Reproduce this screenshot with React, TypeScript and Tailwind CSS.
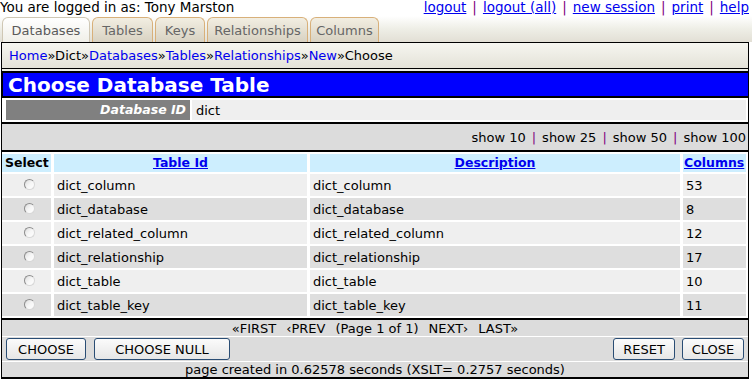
import React from "react";

const rows = [
  ["dict_column", "dict_column", "53"],
  ["dict_database", "dict_database", "8"],
  ["dict_related_column", "dict_related_column", "12"],
  ["dict_relationship", "dict_relationship", "17"],
  ["dict_table", "dict_table", "10"],
  ["dict_table_key", "dict_table_key", "11"],
];

const tabs = [
  ["Databases", "w-[88px]"],
  ["Tables", "w-[61px]"],
  ["Keys", "w-[50px]"],
  ["Relationships", "w-[101px]"],
  ["Columns", "w-[69px]"],
];

function Radio() {
  return (
    <span className="inline-block w-[11px] h-[11px] rounded-full border border-t-[#8c8c8c] border-l-[#8c8c8c] border-r-[#d8d8d8] border-b-[#d8d8d8] bg-gradient-to-br from-[#dcdcdc] via-[#f6f6f6] to-[#ffffff]" />
  );
}

function Btn({ children, w }: { children: React.ReactNode; w: string }) {
  return (
    <button
      className={`${w} h-[22px] rounded-[3px] border border-[#2a4d74] bg-gradient-to-b from-[#fbfbfb] to-[#e6e6e6] text-[13px] text-black leading-none`}
    >
      {children}
    </button>
  );
}

export default function App() {
  return (
    <div className="w-[752px] h-[381px] bg-white text-[13px] text-black font-['DejaVu_Sans',sans-serif] leading-none overflow-hidden">
      {/* top line */}
      <div className="flex justify-between items-center h-[16px] pr-[3px] text-[13.5px]">
        <span>You are logged in as: Tony Marston</span>
        <span className="flex gap-[6px]">
          <a className="text-[#0000ee] underline">logout</a>
          <span className="text-[#800080]">|</span>
          <a className="text-[#0000ee] underline">logout (all)</a>
          <span className="text-[#800080]">|</span>
          <a className="text-[#0000ee] underline">new session</a>
          <span className="text-[#800080]">|</span>
          <a className="text-[#0000ee] underline">print</a>
          <span className="text-[#800080]">|</span>
          <a className="text-[#0000ee] underline">help</a>
        </span>
      </div>
      {/* tabs */}
      <div className="flex items-end h-[26px] pl-[2px] bg-gradient-to-b from-[#ffffff] via-[#eeeee6] to-[#e2dfd5]">
        {tabs.map(([t, w], i) => (
          <div
            key={t}
            className={
              i === 0
                ? `${w} h-[25px] mr-[2px] flex items-center justify-center rounded-t-[6px] border border-b-0 border-[#cfc7b4] bg-gradient-to-b from-[#ffffff] to-[#f0efe8] text-[#5a5a5a]`
                : `${w} h-[25px] mr-[2px] flex items-center justify-center rounded-t-[6px] border border-b-0 border-[#d8b07a] bg-gradient-to-b from-[#f2eee2] to-[#d8d2c2] text-[#666]`
            }
          >
            {t}
          </div>
        ))}
      </div>
      {/* breadcrumb */}
      <div className="ml-[1px] w-[748px] h-[27px] border border-black bg-gradient-to-b from-[#f6f6f0] to-[#e4e2d8] flex items-center pl-[7px]">
        <a className="text-[#0000ee]">Home</a>
        <span>»Dict»</span>
        <a className="text-[#0000ee]">Databases</a>
        <span>»</span>
        <a className="text-[#0000ee]">Tables</a>
        <span>»</span>
        <a className="text-[#0000ee]">Relationships</a>
        <span>»</span>
        <a className="text-[#0000ee]">New</a>
        <span>»Choose</span>
      </div>
      <div className="ml-[1px] w-[748px] h-[2px] bg-[#eeeee6] border-x border-black" />
      {/* main box */}
      <div className="ml-[1px] w-[748px] border-x border-b-2 border-black">
        <div className="h-[27px] bg-[#0000ff] border-y-2 border-l border-black flex items-center pl-[5px] text-white font-bold text-[20px]">
          Choose Database Table
        </div>
        <div className="flex gap-[2px] p-[2px] pl-[4px] h-[24px]">
          <div className="w-[184px] bg-[#808080] text-white italic font-bold text-[12.5px] flex items-center justify-end pr-[4px]">
            Database ID
          </div>
          <div className="flex-1 bg-[#efefef] flex items-center pl-[4px]">dict</div>
        </div>
        <div className="h-[30px] bg-[#dcdcdc] border-y-2 border-black flex items-center justify-end pr-[2px] gap-[6px]">
          <span>show 10</span>
          <span className="text-[#800080]">|</span>
          <span>show 25</span>
          <span className="text-[#800080]">|</span>
          <span>show 50</span>
          <span className="text-[#800080]">|</span>
          <span>show 100</span>
        </div>
        <table className="border-separate border-spacing-x-[3px] border-spacing-y-[2px] -ml-[3px] w-[750px] table-fixed">
          <thead>
            <tr className="h-[18px]">
              <th className="w-[49px] bg-[#cdeefe] text-left pl-[3px] font-bold text-[12.5px]">Select</th>
              <th className="w-[253px] bg-[#cdeefe] font-bold text-[12.5px] text-[#0000ee] underline">Table Id</th>
              <th className="w-[370px] bg-[#cdeefe] font-bold text-[12.5px] text-[#0000ee] underline">Description</th>
              <th className="bg-[#cdeefe] font-bold text-[12.5px] text-[#0000ee] underline text-left pl-[1px]">Columns</th>
            </tr>
          </thead>
          <tbody>
            {rows.map((r, i) => {
              const bg = i % 2 === 0 ? "bg-[#efefef]" : "bg-[#dedede]";
              return (
                <tr key={r[0]} className="h-[22px]">
                  <td className={`${bg} text-center pl-[6px]`}>
                    <span className="inline-flex items-center justify-center pt-[1px]"><Radio /></span>
                  </td>
                  <td className={`${bg} pl-[3px]`}>{r[0]}</td>
                  <td className={`${bg} pl-[3px]`}>{r[1]}</td>
                  <td className={`${bg} pl-[3px]`}>{r[2]}</td>
                </tr>
              );
            })}
          </tbody>
        </table>
        <div className="h-[2px] bg-black" />
        <div className="h-[17px] bg-[#dcdcdc] flex items-center justify-center gap-[10px] border-b border-white">
          <span>«FIRST</span>
          <span>‹PREV</span>
          <span>(Page 1 of 1)</span>
          <span>NEXT›</span>
          <span>LAST»</span>
        </div>
        <div className="h-[25px] bg-[#dcdcdc] flex items-center justify-between px-[4px] border-b border-white">
          <div className="flex gap-[8px]">
            <Btn w="w-[80px]">CHOOSE</Btn>
            <Btn w="w-[136px]">CHOOSE NULL</Btn>
          </div>
          <div className="flex gap-[7px]">
            <Btn w="w-[62px]">RESET</Btn>
            <Btn w="w-[62px]">CLOSE</Btn>
          </div>
        </div>
        <div className="h-[15px] bg-[#dcdcdc] flex items-center justify-center">
          page created in 0.62578 seconds (XSLT= 0.2757 seconds)
        </div>
      </div>
    </div>
  );
}
